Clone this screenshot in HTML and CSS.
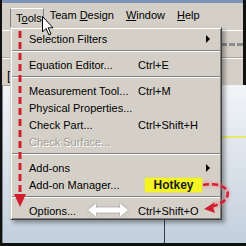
FILE: index.html
```html
<!DOCTYPE html>
<html lang="en">
<head>
  <meta charset="UTF-8">
  <title>Tools menu - Options hotkey</title>
  <link rel="stylesheet" href="styles.css">
</head>
<body>
<div class="shot">
  <div class="window">
    <div class="titlebar"></div>
    <div class="menubar">
      <span class="top-item open">T<u>o</u>ols</span>
      <span class="top-item">Team <u>D</u>esign</span>
      <span class="top-item"><u>W</u>indow</span>
      <span class="top-item"><u>H</u>elp</span>
    </div>
    <div class="toolbar">
      <div class="tb-row"><span class="grip"></span></div>
      <div class="tb-row"><span class="bracket">[</span></div>
    </div>
    <div class="workspace">
      <div class="side"></div>
      <div class="canvas">
        <div class="pane"></div>
        <div class="pane right"><div class="hilite"></div></div>
      </div>
    </div>
  </div>

  <!-- dropdown menu -->
  <div class="menu">
    <div class="item"><span>Selection Filters</span><span></span><span class="sub"></span></div>
    <div class="sep"></div>
    <div class="item"><span>Equation Editor...</span><span>Ctrl+E</span></div>
    <div class="sep"></div>
    <div class="item"><span>Measurement Tool...</span><span>Ctrl+M</span></div>
    <div class="item"><span>Physical Properties...</span><span></span></div>
    <div class="item"><span>Check Part...</span><span>Ctrl+Shift+H</span></div>
    <div class="item disabled"><span>Check Surface...</span><span></span></div>
    <div class="sep"></div>
    <div class="item"><span>Add-ons</span><span></span><span class="sub"></span></div>
    <div class="item"><span>Add-on Manager...</span><span></span></div>
    <div class="sep"></div>
    <div class="item"><span>Options...</span><span>Ctrl+Shift+O</span></div>
  </div>

  <!-- annotations -->
  <svg class="notes" width="246" height="246" viewBox="0 0 246 246">
    <defs>
      <filter id="soft" x="-50%" y="-50%" width="200%" height="200%">
        <feGaussianBlur stdDeviation="1.6"/>
      </filter>
      <filter id="shade" x="-30%" y="-60%" width="160%" height="220%">
        <feDropShadow dx="0" dy="0" stdDeviation="1.2" flood-color="#8a8a8a"/>
      </filter>
    </defs>
    <!-- down arrow along the menu -->
    <line x1="20" y1="31" x2="20" y2="197" stroke="#f07a86" stroke-width="6" opacity="0.45" filter="url(#soft)"/>
    <line x1="20" y1="31" x2="20" y2="197" stroke="#d21f2e" stroke-width="3" stroke-dasharray="7 4"/>
    <polygon points="14,194 26,194 20,207" fill="#d21f2e"/>
    <!-- curved arrow from the label -->
    <path d="M203,185 C215,182 232,187 227,197 C224,203 217,205 211,207" fill="none" stroke="#f07a86" stroke-width="5" opacity="0.4" filter="url(#soft)"/>
    <path d="M203,185 C215,182 232,187 227,197 C224,203 217,205 211,207" fill="none" stroke="#d21f2e" stroke-width="2.5" stroke-dasharray="6 3"/>
    <polygon points="204,209 215,202 213,207 215,213" fill="#d21f2e"/>
    <!-- white double arrow -->
    <polygon points="88,210 96,203.5 96,207.5 120,207.5 120,203.5 128,210 120,216.5 120,212.5 96,212.5 96,216.5" fill="#fff" filter="url(#shade)"/>
    <!-- mouse pointer -->
    <path d="M42.5,16.5 L42.5,32 L46,28.5 L49,35 L51,34 L48.2,27.8 L53,27.8 Z" fill="#fff" stroke="#000" stroke-width="1" stroke-linejoin="round"/>
  </svg>

  <div class="hotkey">Hotkey</div>
</div>
</body>
</html>
```

FILE: styles.css
```css
body {
  margin: 0;
  font-family: "Liberation Sans", Arial, sans-serif;
  font-size: 11px;
  color: #000;
}
.shot {
  position: relative;
  width: 246px;
  height: 246px;
  overflow: hidden;
}
.window {
  box-sizing: border-box;
  width: 246px;
  height: 246px;
  display: flex;
  flex-direction: column;
  border-left: 2px solid #111;
  border-right: 3px solid #111;
  border-bottom: 3px solid #111;
  background: #d4d0c8;
}
.titlebar { height: 3px; background: #7d92b8; }

.menubar {
  height: 25px;
  display: flex;
  align-items: stretch;
  padding-left: 8px;
}
.top-item {
  display: block;
  padding: 0 6px;
  line-height: 25px;
  white-space: nowrap;
}
.top-item u { text-decoration: underline; }
.top-item.open {
  margin-top: 5px;
  line-height: 19px;
  padding: 0 1px 0 5px;
  border: 1px solid #808080;
  border-top-color: #fff;
  border-bottom: none;
}

.toolbar { height: 57px; padding-top: 2px; box-sizing: border-box; }
.tb-row {
  height: 26px;
  border-top: 1px solid #fff;
  border-bottom: 1px solid #a8a49c;
  display: flex;
  align-items: center;
  justify-content: flex-end;
  position: relative;
}
.grip {
  width: 22px;
  height: 3px;
  background: repeating-linear-gradient(90deg, #8c8c8c 0 6px, transparent 6px 8px);
  margin-top: 1px;
}
.bracket {
  position: absolute;
  left: 5px;
  top: 9px;
  font-size: 13px;
}

.workspace { flex: 1; display: flex; }
.side {
  width: 6px;
  border-right: 1px solid #7e8690;
  background: linear-gradient(#eef1f4, #c5d1de);
}
.canvas { flex: 1; display: flex; }
.pane {
  width: 161px;
  background: linear-gradient(#f2f5f8, #c3cfdd);
}
.pane.right {
  flex: 1;
  border-left: 1px solid #2f3f4e;
  border-right: 1px solid #55606b;
  position: relative;
}
.hilite {
  position: absolute;
  left: 0;
  right: 0;
  top: 51px;
  height: 2px;
  background: #e8e86a;
}

.menu {
  position: absolute;
  left: 10px;
  top: 27px;
  width: 212px;
  height: 193px;
  box-sizing: border-box;
  padding: 2px 1px 1px;
  background: #d4d0c8;
  border: 1px solid;
  border-color: #d4d0c8 #404040 #404040 #d4d0c8;
  box-shadow: inset 1px 1px #fff, inset -1px -1px #808080, 3px 3px 4px rgba(0,0,0,0.35);
}
.item {
  height: 17px;
  display: grid;
  grid-template-columns: 109px 1fr 14px;
  align-items: center;
  padding-left: 17px;
  white-space: nowrap;
}
.item.disabled { color: #a09c94; text-shadow: 1px 1px #fff; }
.sub {
  width: 0;
  height: 0;
  border-top: 4px solid transparent;
  border-bottom: 4px solid transparent;
  border-left: 4px solid #000;
}
.sep {
  height: 9px;
  box-sizing: border-box;
  padding-top: 3px;
}
.sep::before {
  content: "";
  display: block;
  border-top: 1px solid #808080;
  border-bottom: 1px solid #fff;
}

.notes { position: absolute; left: 0; top: 0; }
.hotkey {
  position: absolute;
  left: 145px;
  top: 178px;
  width: 57px;
  height: 14px;
  line-height: 14px;
  text-align: center;
  background: #f4f424;
  box-shadow: 0 0 2px #e8e820;
  font-weight: bold;
  font-size: 12px;
  color: #1c1c1c;
}
```
